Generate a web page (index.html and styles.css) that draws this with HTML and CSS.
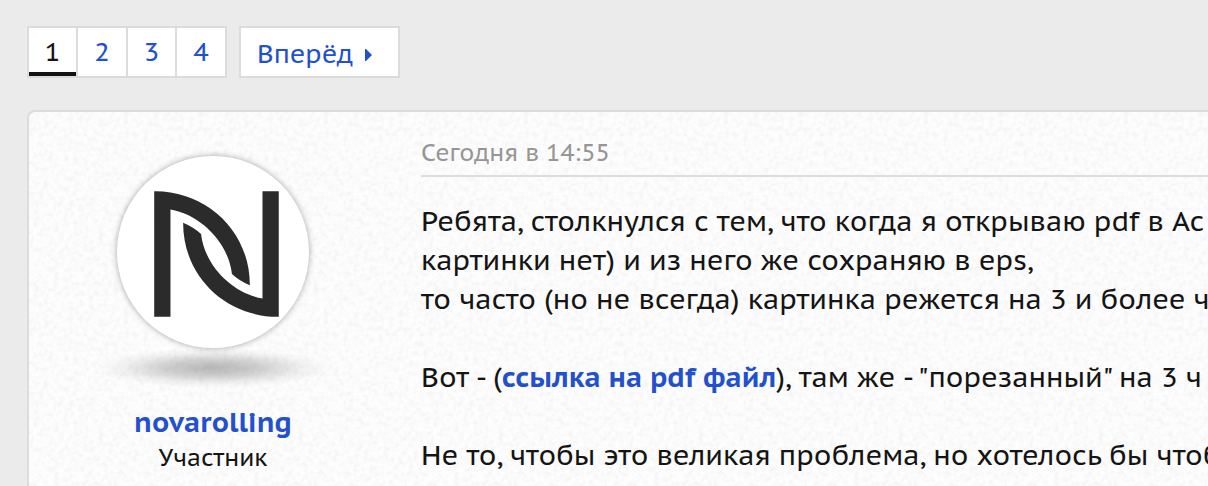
FILE: index.html
```html
<!DOCTYPE html>
<html lang="ru">
<head>
  <meta charset="utf-8">
  <title>Форум</title>
  <link rel="stylesheet" href="styles.css">
</head>
<body>

  <nav class="pagination">
    <ul class="pages">
      <li><a href="#" class="page current">1</a></li>
      <li><a href="#" class="page">2</a></li>
      <li><a href="#" class="page">3</a></li>
      <li><a href="#" class="page">4</a></li>
    </ul>
    <a href="#" class="next">Вперёд
      <svg class="arrow" viewBox="0 0 7 12"><path d="M0 0h1l6 6-6 6H0z"/></svg>
    </a>
  </nav>

  <article class="post">
    <aside class="author">
      <svg class="avatar" viewBox="80 46 578 578">
        <path d="M192 152C345 150 480 268 480 435Q447 421 426 401C415 305 330 222 241 207V530H192z"/>
        <path d="M567 530C414 532 279 414 279 247Q312 261 333 281C344 377 429 460 518 475V152H567z"/>
      </svg>
      <div class="avatar-shadow"></div>
      <a href="#" class="username">novarolling</a>
      <div class="rank">Участник</div>
    </aside>

    <div class="content">
      <div class="date">Сегодня в 14:55</div>
      <div class="message">
        Ребята, столкнулся с тем, что когда я открываю pdf в Ac<br>
        картинки нет) и из него же сохраняю в eps,<br>
        то часто (но не всегда) картинка режется на 3 и более ч<br>
        <br>
        Вот - (<a href="#" class="file-link">ссылка на pdf файл</a>), там же - "порезанный" на 3 ч<br>
        <br>
        Не то, чтобы это великая проблема, но хотелось бы чтоб
      </div>
    </div>
  </article>

</body>
</html>
```
FILE: styles.css
```css
body {
  display: flex;
  flex-direction: column;
  box-sizing: border-box;
  min-height: 100vh;
  margin: 0;
  padding: 26px 0 0 27px;
  background: #ebebeb;
  color: #141414;
  font-family: "PT Sans Caption", "Noto Sans", sans-serif;
  font-size: 28px;
  overflow-x: hidden;
}

a {
  color: #2350cc;
  text-decoration: none;
}

/* pagination */
.pagination {
  display: flex;
  gap: 12px;
  margin-bottom: 32px;
  font-size: 26px;
  line-height: 48px;
}

.pages {
  display: flex;
  margin: 0;
  padding: 0;
  list-style: none;
  border: 2px solid #dcdcdc;
  background: #fff;
}

.pages li + li {
  border-left: 2px solid #dcdcdc;
}

.page {
  display: block;
  width: 48px;
  height: 48px;
  text-align: center;
}

.pages li:nth-child(odd) .page {
  width: 47px;
}

.page.current {
  color: #141414;
  box-shadow: inset 0 -4px #141414;
}

.next {
  display: flex;
  align-items: center;
  gap: 12px;
  padding: 4px 26px 0 16px;
  height: 44px;
  border: 2px solid #dcdcdc;
  background: #fff;
}

.arrow {
  width: 7px;
  height: 12px;
  padding-top: 2px;
  fill: #2350cc;
}

/* post */
.post {
  display: flex;
  flex: 1;
  border: 2px solid #dcdcdc;
  border-right: 0;
  border-bottom: 0;
  border-radius: 8px 0 0 0;
  background: #fdfdfd url("data:image/svg+xml,%3Csvg xmlns='http://www.w3.org/2000/svg' width='200' height='200'%3E%3Cfilter id='n' x='0' y='0' width='100%25' height='100%25'%3E%3CfeTurbulence type='fractalNoise' baseFrequency='.2' numOctaves='3' stitchTiles='stitch'/%3E%3CfeColorMatrix values='0 0 0 0 .9 0 0 0 0 .9 0 0 0 0 .9 2.2 0 0 0 -.9'/%3E%3C/filter%3E%3Crect width='200' height='200' filter='url(%23n)'/%3E%3C/svg%3E");
}

.author {
  display: flex;
  flex-direction: column;
  align-items: center;
  flex: none;
  width: 368px;
  padding-top: 44px;
}

.avatar {
  width: 192px;
  height: 192px;
  border-radius: 50%;
  background: #fff;
  box-shadow: 0 0 6px rgba(0, 0, 0, .35);
  fill: #2b2b2b;
}

.avatar-shadow {
  width: 236px;
  height: 40px;
  background: radial-gradient(closest-side, rgba(0, 0, 0, .28), rgba(0, 0, 0, .18) 40%, rgba(0, 0, 0, .05) 75%, transparent);
}

.username {
  margin-top: 16px;
  font-weight: bold;
  line-height: 36px;
}

.rank {
  font-size: 24px;
  line-height: 36px;
}

.content {
  flex: 1;
  min-width: 0;
  padding: 24px 0 0 24px;
}

.date {
  padding-bottom: 5px;
  border-bottom: 2px solid #dcdcdc;
  color: #969696;
  font-size: 24px;
  line-height: 34px;
}

.message {
  margin-top: 24px;
  line-height: 39px;
  white-space: nowrap;
}

.file-link {
  font-weight: bold;
}
```
